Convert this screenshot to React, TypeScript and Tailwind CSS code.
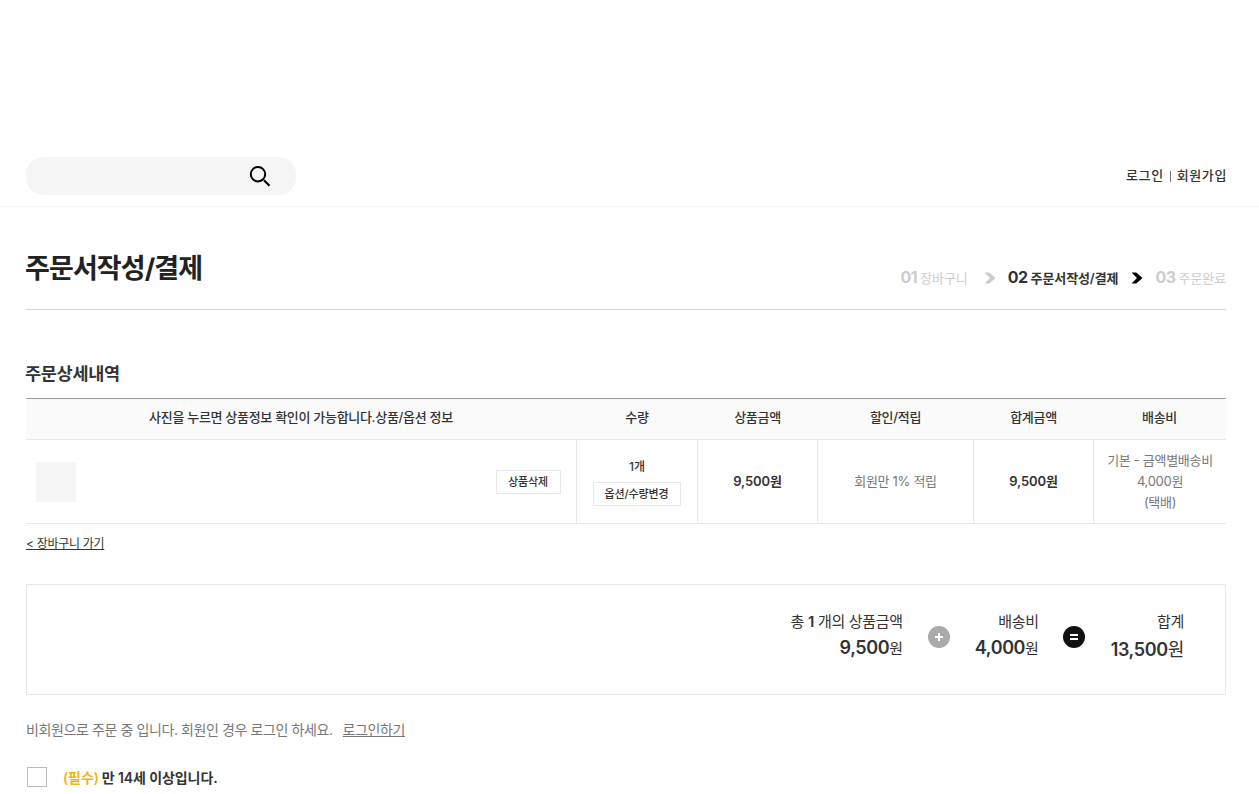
import clsx from 'clsx';

type Step = {
  number: string;
  label: string;
  current?: boolean;
};

const STEPS: Step[] = [
  { number: '01', label: '장바구니' },
  { number: '02', label: '주문서작성/결제', current: true },
  { number: '03', label: '주문완료' },
];

const COLUMNS = [
  { label: '사진을 누르면 상품정보 확인이 가능합니다.상품/옵션 정보', className: 'w-[551px]' },
  { label: '수량', className: 'w-[121px]' },
  { label: '상품금액', className: 'w-[120px]' },
  { label: '할인/적립', className: 'w-[156px]' },
  { label: '합계금액', className: 'w-[120px]' },
  { label: '배송비', className: 'w-[132px]' },
];

const CELL = 'border-r border-b border-[#e8e8e8] p-0 align-middle';

function SearchIcon() {
  return (
    <svg width="22" height="22" viewBox="0 0 22 22" fill="none" stroke="#000" strokeWidth="2">
      <circle cx="9" cy="9.2" r="7.2" />
      <path d="M15 15.2l5.500 5.500" strokeWidth="2.2" />
    </svg>
  );
}

function StepArrow({ active }: { active: boolean }) {
  return (
    <svg width="10" height="12" viewBox="0 0 10 12" fill={active ? '#000' : '#ccc'}>
      <path d="M0 .5h4.200L10 5.500v1l-5.800 5H0V11l5-5-5-5z" />
    </svg>
  );
}

function SmallButton({ children, className }: { children: string; className: string }) {
  return (
    <button
      className={clsx(
        'block h-6 border border-[#e8e8e8] bg-white pr-px text-center text-[11px] leading-[22px] font-medium whitespace-nowrap tracking-[-0.1px] text-[#333]',
        className,
      )}
    >
      {children}
    </button>
  );
}

function Amount({ label, value, total }: { label: React.ReactNode; value: string; total?: boolean }) {
  return (
    <dl className="text-right whitespace-nowrap text-[#333]">
      <dt className="text-[15px] leading-6 tracking-[-0.3px]">{label}</dt>
      <dd className={clsx('flex items-baseline justify-end leading-[28px]', total && 'pt-0.5')}>
        <strong className="text-[18px] font-semibold tracking-[-0.4px]">{value}</strong>
        <span className={clsx('tracking-[-0.2px]', total ? 'text-[18px]' : 'text-[15px]')}>원</span>
      </dd>
    </dl>
  );
}

export default function App() {
  return (
    <div className="h-[794px] w-full overflow-hidden bg-white font-[Inter,'Noto_Sans_CJK_KR',sans-serif] text-[#333]">
      <header className="flex h-[207px] items-end justify-between border-b border-[#f5f5f5] px-[26px] pr-8 pb-[11px]">
        <div className="flex h-[38px] w-[270px] items-center justify-end rounded-[17px] bg-[#f5f5f5] pr-[25px]">
          <SearchIcon />
        </div>
        <div className="flex h-[38px] items-center text-[13px] font-medium tracking-[0.6px] whitespace-nowrap">
          <a>로그인</a>
          <span className="mx-1.5 h-[11px] w-px bg-[#777]" />
          <a>회원가입</a>
        </div>
      </header>

      <main className="ml-[26px] w-[1200px]">
        <div className="flex h-[103px] justify-between border-b border-[#d5d5d5]">
          <h1 className="-ml-px pt-[41px] text-[27px] leading-[42px] font-bold tracking-[-0.9px] text-[#222]">
            주문서작성/결제
          </h1>
          <ol className="flex items-center pt-[38px] text-[13px]">
            {STEPS.map((step, index) => (
              <li
                key={step.number}
                className={clsx(
                  'flex items-center whitespace-nowrap',
                  step.current ? 'font-semibold text-[#333]' : 'text-[#ccc]',
                )}
              >
                {index > 0 && (
                  <span className={clsx('mt-0.5', index === 1 ? 'mx-[13px] ml-[17px]' : 'mx-[13px] ml-[14px]')}>
                    <StepArrow active={index === 2} />
                  </span>
                )}
                <span className="flex items-baseline gap-[3px]">
                  <strong className="text-[16px] font-bold tracking-[-0.5px]">{step.number}</strong>
                  <span className="tracking-[-0.1px]">{step.label}</span>
                </span>
              </li>
            ))}
          </ol>
        </div>

        <h2 className="-ml-px pt-[51px] text-[17.5px] leading-[26px] font-bold tracking-[-0.3px]">주문상세내역</h2>

        <table className="mt-[11px] w-[1200px] table-fixed border-separate border-spacing-0 border-t border-[#999] text-center text-[13px]">
          <thead>
            <tr className="h-[41px] bg-[#fafafa]">
              {COLUMNS.map((column) => (
                <th
                  key={column.label}
                  className={clsx(
                    'border-b border-[#e8e8e8] p-0 pr-px pb-0.5 font-medium tracking-[-0.3px] whitespace-nowrap',
                    column.className,
                  )}
                >
                  {column.label}
                </th>
              ))}
            </tr>
          </thead>
          <tbody>
            <tr className="h-[84px]">
              <td className={CELL}>
                <div className="flex items-center justify-between pr-[15px] pl-2.5">
                  <span className="size-10 bg-[#f5f5f5]" />
                  <SmallButton className="w-[65px]">상품삭제</SmallButton>
                </div>
              </td>
              <td className={CELL}>
                <div className="flex flex-col items-center">
                  <strong className="-mt-px mb-[5px] text-[12px] leading-5 font-medium">1개</strong>
                  <SmallButton className="w-[88px]">옵션/수량변경</SmallButton>
                </div>
              </td>
              <td className={CELL}>
                <strong className="font-semibold tracking-[-0.1px]">9,500원</strong>
              </td>
              <td className={clsx(CELL, 'tracking-[-0.3px] text-[#777]')}>회원만 1% 적립</td>
              <td className={CELL}>
                <strong className="font-semibold tracking-[-0.1px]">9,500원</strong>
              </td>
              <td className="border-b border-[#e8e8e8] p-0 align-middle leading-[21px] tracking-[-0.3px] whitespace-nowrap text-[#777]">
                기본 - 금액별배송비
                <br />
                4,000원
                <br />
                (택배)
              </td>
            </tr>
          </tbody>
        </table>

        <a className="mt-[10px] block w-max text-[12px] leading-5 tracking-[-0.3px] underline">
          &lt; 장바구니 가기
        </a>

        <section className="mt-[30px] flex h-[111px] items-start justify-end border border-[#e8e8e8] pt-[25px] pr-[41px]">
          <Amount
            label={
              <>
                총 <strong className="font-semibold">1</strong> 개의 상품금액
              </>
            }
            value="9,500"
          />
          <svg className="mx-[25px] mt-4" width="22" height="22" viewBox="0 0 22 22">
            <circle cx="11" cy="11" r="11" fill="#aaa" />
            <path d="M7 11h8M11 7v8" stroke="#fff" strokeWidth="2" />
          </svg>
          <Amount label="배송비" value="4,000" />
          <svg className="mr-[26px] ml-6 mt-4" width="22" height="22" viewBox="0 0 22 22">
            <circle cx="11" cy="11" r="11" fill="#111" />
            <path d="M7 9h8M7 13h8" stroke="#fff" strokeWidth="2" />
          </svg>
          <Amount label="합계" value="13,500" total />
        </section>

        <p className="mt-[23px] flex h-6 items-center text-[14px] leading-6 tracking-[-0.4px] whitespace-nowrap text-[#777]">
          비회원으로 주문 중 입니다. 회원인 경우 로그인 하세요.
          <a className="ml-2.5 underline">로그인하기</a>
        </p>

        <label className="mt-[23px] flex h-6 items-center pl-px text-[14px] font-semibold tracking-[-0.1px] whitespace-nowrap">
          <span className="mr-4 size-5 border border-[#bbb] bg-white" />
          <span className="mr-[3px] text-[#efb41d]">(필수)</span>만 14세 이상입니다.
        </label>
      </main>
    </div>
  );
}
